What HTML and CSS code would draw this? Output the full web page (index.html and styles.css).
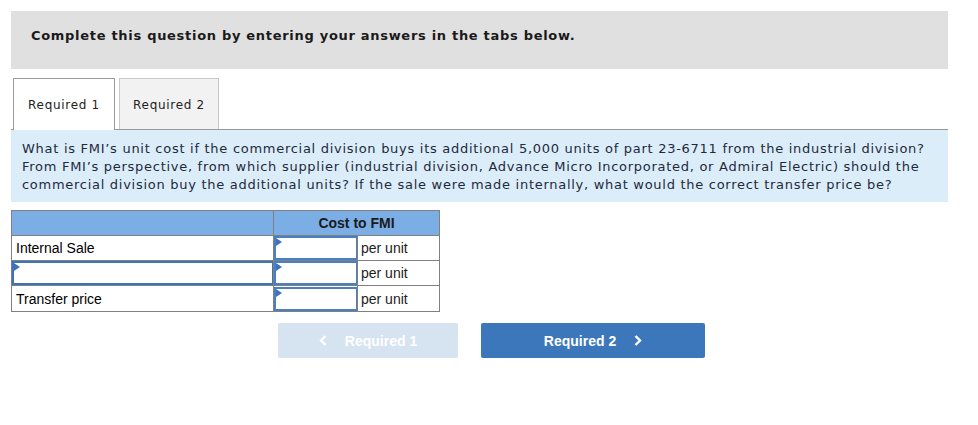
FILE: index.html
```html
<!DOCTYPE html>
<html lang="en">
<head>
    <meta charset="UTF-8">
    <title>Required 1</title>
    <link rel="stylesheet" href="styles.css">
</head>
<body>
    <div class="page">
        <!-- Instructions -->
        <div class="intro">Complete this question by entering your answers in the tabs below.</div>

        <!-- Tabs -->
        <div class="tabs">
            <div class="tab active">Required 1</div>
            <div class="tab">Required 2</div>
        </div>

        <div class="question">
            What is FMI’s unit cost if the commercial division buys its additional 5,000 units of part 23‑6711 from the industrial division?<br>
            From FMI’s perspective, from which supplier (industrial division, Advance Micro Incorporated, or Admiral Electric) should the<br>
            commercial division buy the additional units? If the sale were made internally, what would the correct transfer price be?
        </div>

        <!-- Answer table -->
        <table class="answer-table">
            <tr class="head">
                <th class="col-label"></th>
                <th colspan="2">Cost to FMI</th>
            </tr>
            <tr>
                <td class="col-label">Internal Sale</td>
                <td class="col-input"><span class="field"></span></td>
                <td class="col-unit">per unit</td>
            </tr>
            <tr>
                <td class="col-label has-field"><span class="field wide"></span></td>
                <td class="col-input"><span class="field"></span></td>
                <td class="col-unit">per unit</td>
            </tr>
            <tr>
                <td class="col-label">Transfer price</td>
                <td class="col-input"><span class="field"></span></td>
                <td class="col-unit">per unit</td>
            </tr>
        </table>

        <div class="nav-buttons">
            <button class="nav-btn prev" disabled>
                <svg class="chev" width="8" height="11" viewBox="0 0 8 11"><polyline points="6.5,1 2,5.5 6.5,10" fill="none" stroke="#fff" stroke-width="2.4"/></svg>
                Required 1
            </button>
            <button class="nav-btn next">
                Required 2
                <svg class="chev" width="8" height="11" viewBox="0 0 8 11"><polyline points="1.5,1 6,5.5 1.5,10" fill="none" stroke="#fff" stroke-width="2.4"/></svg>
            </button>
        </div>
    </div>
</body>
</html>
```
FILE: styles.css
```css
/* General Styles */
body {
    margin: 0;
    padding: 0;
    background-color: #ffffff;
    color: #000;
    font-family: 'DejaVu Sans', Verdana, sans-serif;
}

.page {
    padding: 11px 30px 0 11px;
}

.intro {
    background-color: #e0e0e0;
    height: 58px;
    box-sizing: border-box;
    padding: 17px 20px 0 20px;
    font-size: 13px;
    font-weight: bold;
    letter-spacing: 0.7px;
    color: #1a1a1a;
}

.tabs {
    display: flex;
    gap: 4px;
    margin-top: 9px;
    padding-left: 2px;
    border-bottom: 1px solid #999;
}

.tab {
    height: 51px;
    box-sizing: border-box;
    padding: 19px 0 0 0;
    width: 100px;
    text-align: center;
    font-size: 12px;
    letter-spacing: 0.7px;
    color: #222;
    background-color: #f2f2f2;
    border: 1px solid #c8c8c8;
    border-bottom: none;
}

.tab.active {
    width: 102px;
    background-color: #ffffff;
    border-color: #999;
    margin-bottom: -1px;
    height: 52px;
}

.question {
    background-color: #dcedfa;
    height: 72px;
    box-sizing: border-box;
    padding: 10px 11px 0 11px;
    font-size: 13px;
    line-height: 18px;
    letter-spacing: 0.72px;
    white-space: nowrap;
    color: #1e2a3a;
}

/* Table */
.answer-table {
    margin-top: 8px;
    border-collapse: collapse;
    font-family: 'Liberation Sans', Arial, sans-serif;
    font-size: 14px;
}

.answer-table th,
.answer-table td {
    border: 1px solid #808080;
    padding: 0;
    height: 24px;
}

.answer-table tr:last-child td {
    height: 25px;
}

.answer-table .head th {
    background-color: #7aaee5;
    font-weight: bold;
    text-align: center;
    color: #1a1a1a;
}

.col-label {
    width: 262px;
    padding-left: 4px !important;
    box-sizing: border-box;
}

.col-label.has-field {
    padding-left: 0 !important;
}

.col-input {
    width: 83px;
}

.col-unit {
    width: 82px;
    padding-left: 3px !important;
    box-sizing: border-box;
    color: #222;
}

.field {
    position: relative;
    display: block;
    height: 24px;
    box-sizing: border-box;
    border: 2px solid #4a80c0;
    border-right-width: 1px;
    background: #fff;
}

.field::before {
    content: "";
    position: absolute;
    top: 0;
    left: 0;
    border-top: 4px solid transparent;
    border-bottom: 4px solid transparent;
    border-left: 6px solid #3b74bd;
}

.field.wide {
    border-color: #3b74bd;
}

/* Nav buttons */
.nav-buttons {
    display: flex;
    gap: 23px;
    margin-top: 11px;
    padding-left: 267px;
}

.nav-btn {
    display: flex;
    align-items: center;
    justify-content: center;
    height: 35px;
    border: none;
    border-radius: 2px;
    font-family: 'Liberation Sans', Arial, sans-serif;
    font-size: 14px;
    font-weight: bold;
    color: #fff;
}

.nav-btn.prev {
    width: 180px;
    background-color: #d6e3f1;
}

.nav-btn.prev .chev {
    margin-right: 18px;
}

.nav-btn.next {
    width: 224px;
    background-color: #3c77bb;
}

.nav-btn.next .chev {
    margin-left: 18px;
}
```
